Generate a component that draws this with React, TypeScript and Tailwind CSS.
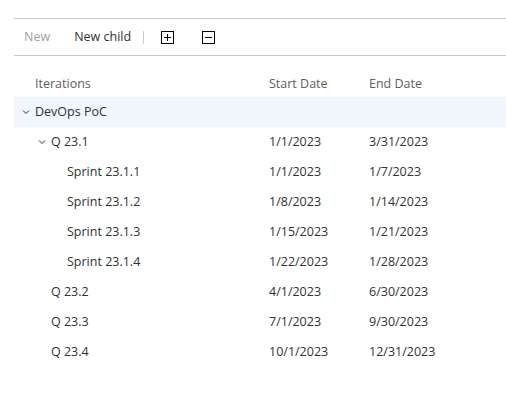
import React from "react";

type Row = { name: string; level: number; chevron?: boolean; start: string; end: string; selected?: boolean };

const rows: Row[] = [
  { name: "DevOps PoC", level: 0, chevron: true, start: "", end: "", selected: true },
  { name: "Q 23.1", level: 1, chevron: true, start: "1/1/2023", end: "3/31/2023" },
  { name: "Sprint 23.1.1", level: 2, start: "1/1/2023", end: "1/7/2023" },
  { name: "Sprint 23.1.2", level: 2, start: "1/8/2023", end: "1/14/2023" },
  { name: "Sprint 23.1.3", level: 2, start: "1/15/2023", end: "1/21/2023" },
  { name: "Sprint 23.1.4", level: 2, start: "1/22/2023", end: "1/28/2023" },
  { name: "Q 23.2", level: 1, start: "4/1/2023", end: "6/30/2023" },
  { name: "Q 23.3", level: 1, start: "7/1/2023", end: "9/30/2023" },
  { name: "Q 23.4", level: 1, start: "10/1/2023", end: "12/31/2023" },
];

const Chevron = () => (
  <svg width="8" height="6" viewBox="0 0 8 6" className="shrink-0">
    <path d="M1 1.5 L4 4.5 L7 1.5" fill="none" stroke="#323130" strokeWidth="1" />
  </svg>
);

const BoxIcon = ({ plus }: { plus?: boolean }) => (
  <svg width="13" height="13" viewBox="0 0 13 13">
    <rect x="0.5" y="0.5" width="12" height="12" fill="none" stroke="#000" strokeWidth="1" />
    <path d="M3 6.5 H10" stroke="#000" strokeWidth="1" />
    {plus && <path d="M6.5 3 V10" stroke="#000" strokeWidth="1" />}
  </svg>
);

export default function App() {
  return (
    <div
      className="w-[506px] h-[405px] bg-white text-[12.5px] text-[#323130] pt-[18px] pl-[14px]"
      style={{ fontFamily: '"Open Sans", "Noto Sans", sans-serif' }}
    >
      <div className="border-t border-b border-[#c8c8c8] h-[38px] flex items-center pt-[1px]">
        <span className="ml-[10px] text-[#a19f9d]">New</span>
        <span className="ml-[24px]">New child</span>
        <span className="ml-[12px] w-px h-[13px] bg-[#c8c8c8]" />
        <span className="ml-[17px] flex"><BoxIcon plus /></span>
        <span className="ml-[28px] flex"><BoxIcon /></span>
      </div>
      <div className="mt-[12px] h-[29px] flex items-center text-[#605e5c] pl-[21px] pt-[3px]">
        <span className="w-[234px]">Iterations</span>
        <span className="w-[100px]">Start Date</span>
        <span>End Date</span>
      </div>
      <div className="flex flex-col">
        {rows.map((r) => (
          <div
            key={r.name}
            className={`h-[30px] flex items-center ${r.selected ? "bg-[#eff6fc]" : ""}`}
          >
            <div className="w-[255px] flex items-center">
              {r.level === 0 && (
                <div className="flex items-center pl-[8px] gap-[5px]">
                  <Chevron />
                  <span>{r.name}</span>
                </div>
              )}
              {r.level === 1 && (
                <div className="flex items-center pl-[24px] gap-[5px]">
                  {r.chevron ? <Chevron /> : <span className="w-[8px]" />}
                  <span>{r.name}</span>
                </div>
              )}
              {r.level === 2 && <span className="pl-[53px]">{r.name}</span>}
            </div>
            <span className="w-[100px]">{r.start}</span>
            <span>{r.end}</span>
          </div>
        ))}
      </div>
    </div>
  );
}
